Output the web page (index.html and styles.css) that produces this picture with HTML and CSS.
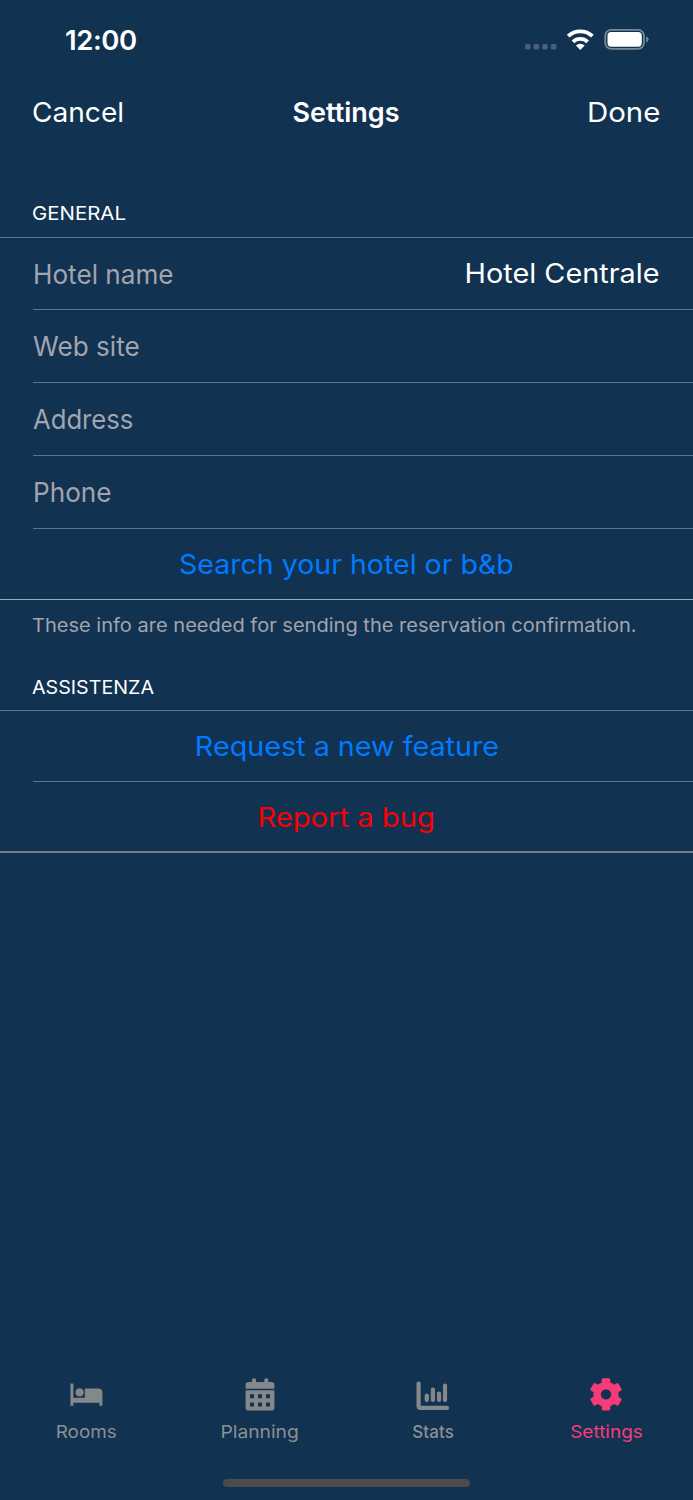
FILE: index.html
```
<!DOCTYPE html>
<html lang="en">
<head>
<meta charset="utf-8">
<title>Settings</title>
<link rel="stylesheet" href="styles.css">
</head>
<body>
<div class="screen">
  <header class="status">
    <span class="clock">12:00</span>
    <svg class="status-icons" width="126" height="24" viewBox="0 0 126 24">
      <g fill="#4a6078"><rect x="1" y="16" width="5.6" height="5.4" rx="1.6"/><rect x="9.6" y="16" width="5.6" height="5.4" rx="1.6"/><rect x="18.2" y="16" width="5.6" height="5.4" rx="1.6"/><rect x="26.8" y="16" width="5.6" height="5.4" rx="1.6"/></g>
      <g fill="none" stroke="#fff" stroke-width="3.9"><path d="M44.2 8.2a17.5 17.5 0 0 1 24.2 0"/><path d="M49 13.8a10.6 10.6 0 0 1 14.6 0"/></g>
      <path d="M56.3 22l-4.4-4.4a6.4 6.4 0 0 1 8.8 0z" fill="#fff"/>
      <rect x="81.2" y="1.9" width="38.8" height="18.9" rx="6" fill="none" stroke="#75879a" stroke-width="1.8"/>
      <rect x="83.5" y="4.1" width="34.3" height="14.6" rx="3.6" fill="#fff"/>
      <path d="M122.2 8.2q2.4 .9 2.4 3.1t-2.4 3.1z" fill="#75879a"/>
    </svg>
  </header>
  <nav class="navbar">
    <span class="geo cancel">Cancel</span>
    <h1 class="title">Settings</h1>
    <span class="geo done">Done</span>
  </nav>
  <main>
    <h2 class="heading general"><span>GENERAL</span></h2>
    <div class="row field first"><span class="label l-hotel">Hotel name</span><span class="geo hotel">Hotel Centrale</span></div>
    <div class="row field"><span class="label l-web">Web site</span></div>
    <div class="row field"><span class="label l-address">Address</span></div>
    <div class="row field"><span class="label l-phone">Phone</span></div>
    <div class="row action"><span class="geo search">Search your hotel or b&amp;b</span></div>
    <p class="note"><span>These info are needed for sending the reservation confirmation.</span></p>
    <h2 class="heading support"><span>ASSISTENZA</span></h2>
    <div class="row action first"><span class="geo request">Request a new feature</span></div>
    <div class="row action last"><span class="geo report">Report a bug</span></div>
  </main>
  <footer class="tabs">
    <div class="tab">
      <svg width="34" height="36" viewBox="0 0 34 36" fill="currentColor"><path d="M.4 7.6h3v14.2h11.4V12.4h13.6a4 4 0 0 1 4 4V29.7h-3v-2.9H3.4v2.9h-3z"/><circle cx="9.6" cy="16.4" r="4.2"/></svg>
      <span class="t-rooms">Rooms</span>
    </div>
    <div class="tab">
      <svg width="34" height="36" viewBox="0 0 34 36" fill="currentColor"><rect x="9" y="2.2" width="4" height="7" rx="1.6"/><rect x="21.3" y="2.2" width="4" height="7" rx="1.6"/><path d="M5.2 6h23.6a2.6 2.6 0 0 1 2.6 2.6V12.8H2.6V8.6A2.6 2.6 0 0 1 5.2 6z"/><path fill-rule="evenodd" d="M2.6 14.2h28.8v17.6a2.8 2.8 0 0 1-2.8 2.8H5.4a2.8 2.8 0 0 1-2.8-2.8zM7 18.2v4h4v-4zm8 0v4h4v-4zm8 0v4h4v-4zM7 26.4v4h4v-4zm8 0v4h4v-4zm8 0v4h4v-4z"/></svg>
      <span class="t-planning">Planning</span>
    </div>
    <div class="tab">
      <svg width="34" height="36" viewBox="0 0 34 36" fill="none" stroke="currentColor" stroke-width="4.2" stroke-linecap="round"><path d="M2.6 7.6V29.7q0 2.2 2.2 2.2H31"/><path d="M10.8 19.6v4.4M16.9 13.6v10.4M23 17.6v6.4M29 9.6v14.4"/></svg>
      <span class="t-stats">Stats</span>
    </div>
    <div class="tab active">
      <svg width="34" height="36" viewBox="0 0 34 36" fill="currentColor"><defs><path id="tooth" d="M12.8 9V3.6q0-1.4 1.4-1.4h5.6q1.4 0 1.4 1.4V9z"/></defs><circle cx="17" cy="18.4" r="8.9" fill="none" stroke="currentColor" stroke-width="7.4"/><use href="#tooth"/><use href="#tooth" transform="rotate(60 17 18.4)"/><use href="#tooth" transform="rotate(120 17 18.4)"/><use href="#tooth" transform="rotate(180 17 18.4)"/><use href="#tooth" transform="rotate(240 17 18.4)"/><use href="#tooth" transform="rotate(300 17 18.4)"/></svg>
      <span class="t-settings">Settings</span>
    </div>
  </footer>
  <div class="home"></div>
</div>
</body>
</html>
```
FILE: styles.css
```
* { box-sizing: border-box; }
body { margin: 0; background: #113250; }
.screen { height: 1500px; display: flex; flex-direction: column; color: #fff; font-family: Inter, "Liberation Sans", sans-serif; white-space: nowrap; }
.status { height: 80px; padding: 0 43px 0 65px; display: flex; justify-content: space-between; align-items: center; }
.clock { font-size: 27.5px; font-weight: 600; letter-spacing: -0.4px; }
.navbar { height: 64px; padding: 0 33px 0 32px; display: grid; grid-template-columns: 1fr auto 1fr; align-items: center; }
.geo { font-size: 27px; font-weight: 400; }
.cancel { justify-self: start; transform: scaleX(1.04); transform-origin: left; }
.done { justify-self: end; transform: scaleX(1.09); transform-origin: right; }
.title { margin: 0; font-size: 27px; font-weight: 600; }
main { flex: 1; }
.heading { margin: 0; padding-left: 32px; font-size: 19px; line-height: 24px; font-weight: 400; }
.heading span, .note span { display: inline-block; transform-origin: left; }
.general { padding-top: 58px; height: 93px; }
.general span { transform: scaleX(1.075); }
.support { padding-top: 37px; height: 71px; }
.support span { transform: scaleX(1.035); }
.row { margin-left: 33px; border-top: 1px solid #617286; display: flex; align-items: center; }
.first { margin-left: 0; padding-left: 33px; }
.field { height: 73px; justify-content: space-between; padding-right: 33px; }
.first.field { height: 72px; }
.label { color: #a2a4ae; font-size: 27px; padding-top: 1px; transform-origin: left; }
.l-hotel, .l-web, .l-phone { transform: scaleX(0.968); }
.l-address { transform: scaleX(0.95); }
.hotel { transform: scaleX(1.068); transform-origin: right; }
.action { height: 71px; justify-content: center; color: #007aff; padding-right: 33px; }
.search { transform: scaleX(1.057); }
.request { transform: scaleX(1.064); }
.report { transform: scaleX(1.08); }
.note { margin: 0; padding: 13px 32px 0; border-top: 1px solid #a0aab5; color: #a2a4ae; font-size: 18.5px; line-height: 24px; height: 40px; }
.note span { transform: scaleX(1.083); }
.last { position: relative; color: #fa0005; }
.last::after { content: ""; position: absolute; left: -33px; right: 0; bottom: -1px; height: 2px; background: #71818f; }
.tabs { height: 90px; display: grid; grid-template-columns: repeat(4, 1fr); color: #8c8f92; }
.tab { display: flex; flex-direction: column; align-items: center; font-size: 17.5px; line-height: 24px; gap: 8px; }
.tab svg { color: #84888b; display: block; }
.t-rooms { transform: scaleX(1.08); }
.t-planning { transform: scaleX(1.1); }
.t-stats { font-size: 17px; font-weight: 500; letter-spacing: 0.1px; }
.t-settings { transform: scaleX(1.085); }
.tab.active, .tab.active svg { color: #f63b78; }
.home { width: 247px; height: 8px; margin: 13px auto 13px; border-radius: 4px; background: #4b4b4b; }
```
